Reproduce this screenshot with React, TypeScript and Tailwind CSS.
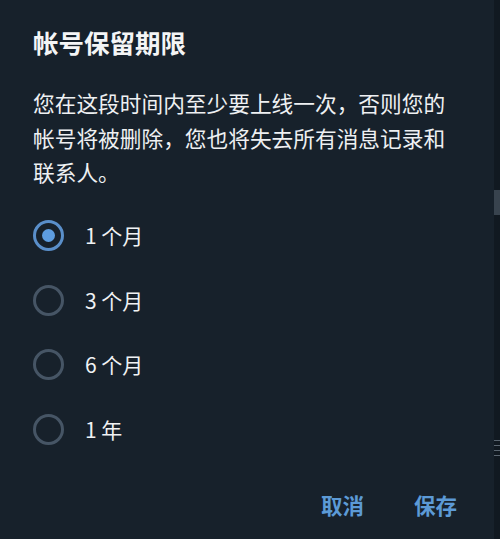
import React, { useState } from "react";

const options = ["1 个月", "3 个月", "6 个月", "1 年"];

export default function App() {
  const [sel, setSel] = useState(0);
  return (
    <div
      className="flex w-[500px] h-[539px] overflow-hidden bg-[#17212b]"
      style={{ fontFamily: '"Noto Sans CJK SC", "Noto Sans", sans-serif' }}
    >
      <div className="flex-1 flex flex-col px-[33px] bg-[#17212b] text-[#f2f4f5]">
        <h1 className="pt-[27px] text-[25.5px] leading-[30px] font-bold text-[#f4f5f6]">
          帐号保留期限
        </h1>
        <p className="mt-[29px] text-[21.7px] leading-[34.5px] text-[#eef0f2]">
          您在这段时间内至少要上线一次，否则您的帐号将被删除，您也将失去所有消息记录和联系人。
        </p>
        <div className="mt-[14px] flex flex-col">
          {options.map((o, i) => (
            <button
              key={o}
              onClick={() => setSel(i)}
              className="h-[64.6px] flex items-center gap-[21px] text-left"
            >
              <span
                className={
                  "w-[31px] h-[31px] rounded-full border-[3px] flex items-center justify-center " +
                  (sel === i ? "border-[#5a8fca]" : "border-[#465565]")
                }
              >
                {sel === i && (
                  <span className="w-[13px] h-[13px] rounded-full bg-[#5d9de0]" />
                )}
              </span>
              <span className="text-[21px] leading-[25px] text-[#f0f2f4]">{o}</span>
            </button>
          ))}
        </div>
        <div className="mt-[30px] flex justify-end gap-[50px] mr-[4px]">
          <button className="text-[21.5px] leading-[26px] font-bold text-[#5c9ad6]">取消</button>
          <button className="text-[21.5px] leading-[26px] font-bold text-[#5c9ad6]">保存</button>
        </div>
      </div>
      <div className="w-[6px] bg-[#111921] flex flex-col">
        <div className="mt-[190px] h-[25px] bg-[#38434e]" />
        <div className="mt-[225px] flex flex-col gap-[4px]">
          <div className="h-[1px] bg-[#5a6570]" />
          <div className="h-[1px] bg-[#5a6570]" />
          <div className="h-[1px] bg-[#5a6570]" />
          <div className="h-[1px] bg-[#5a6570]" />
        </div>
      </div>
    </div>
  );
}
